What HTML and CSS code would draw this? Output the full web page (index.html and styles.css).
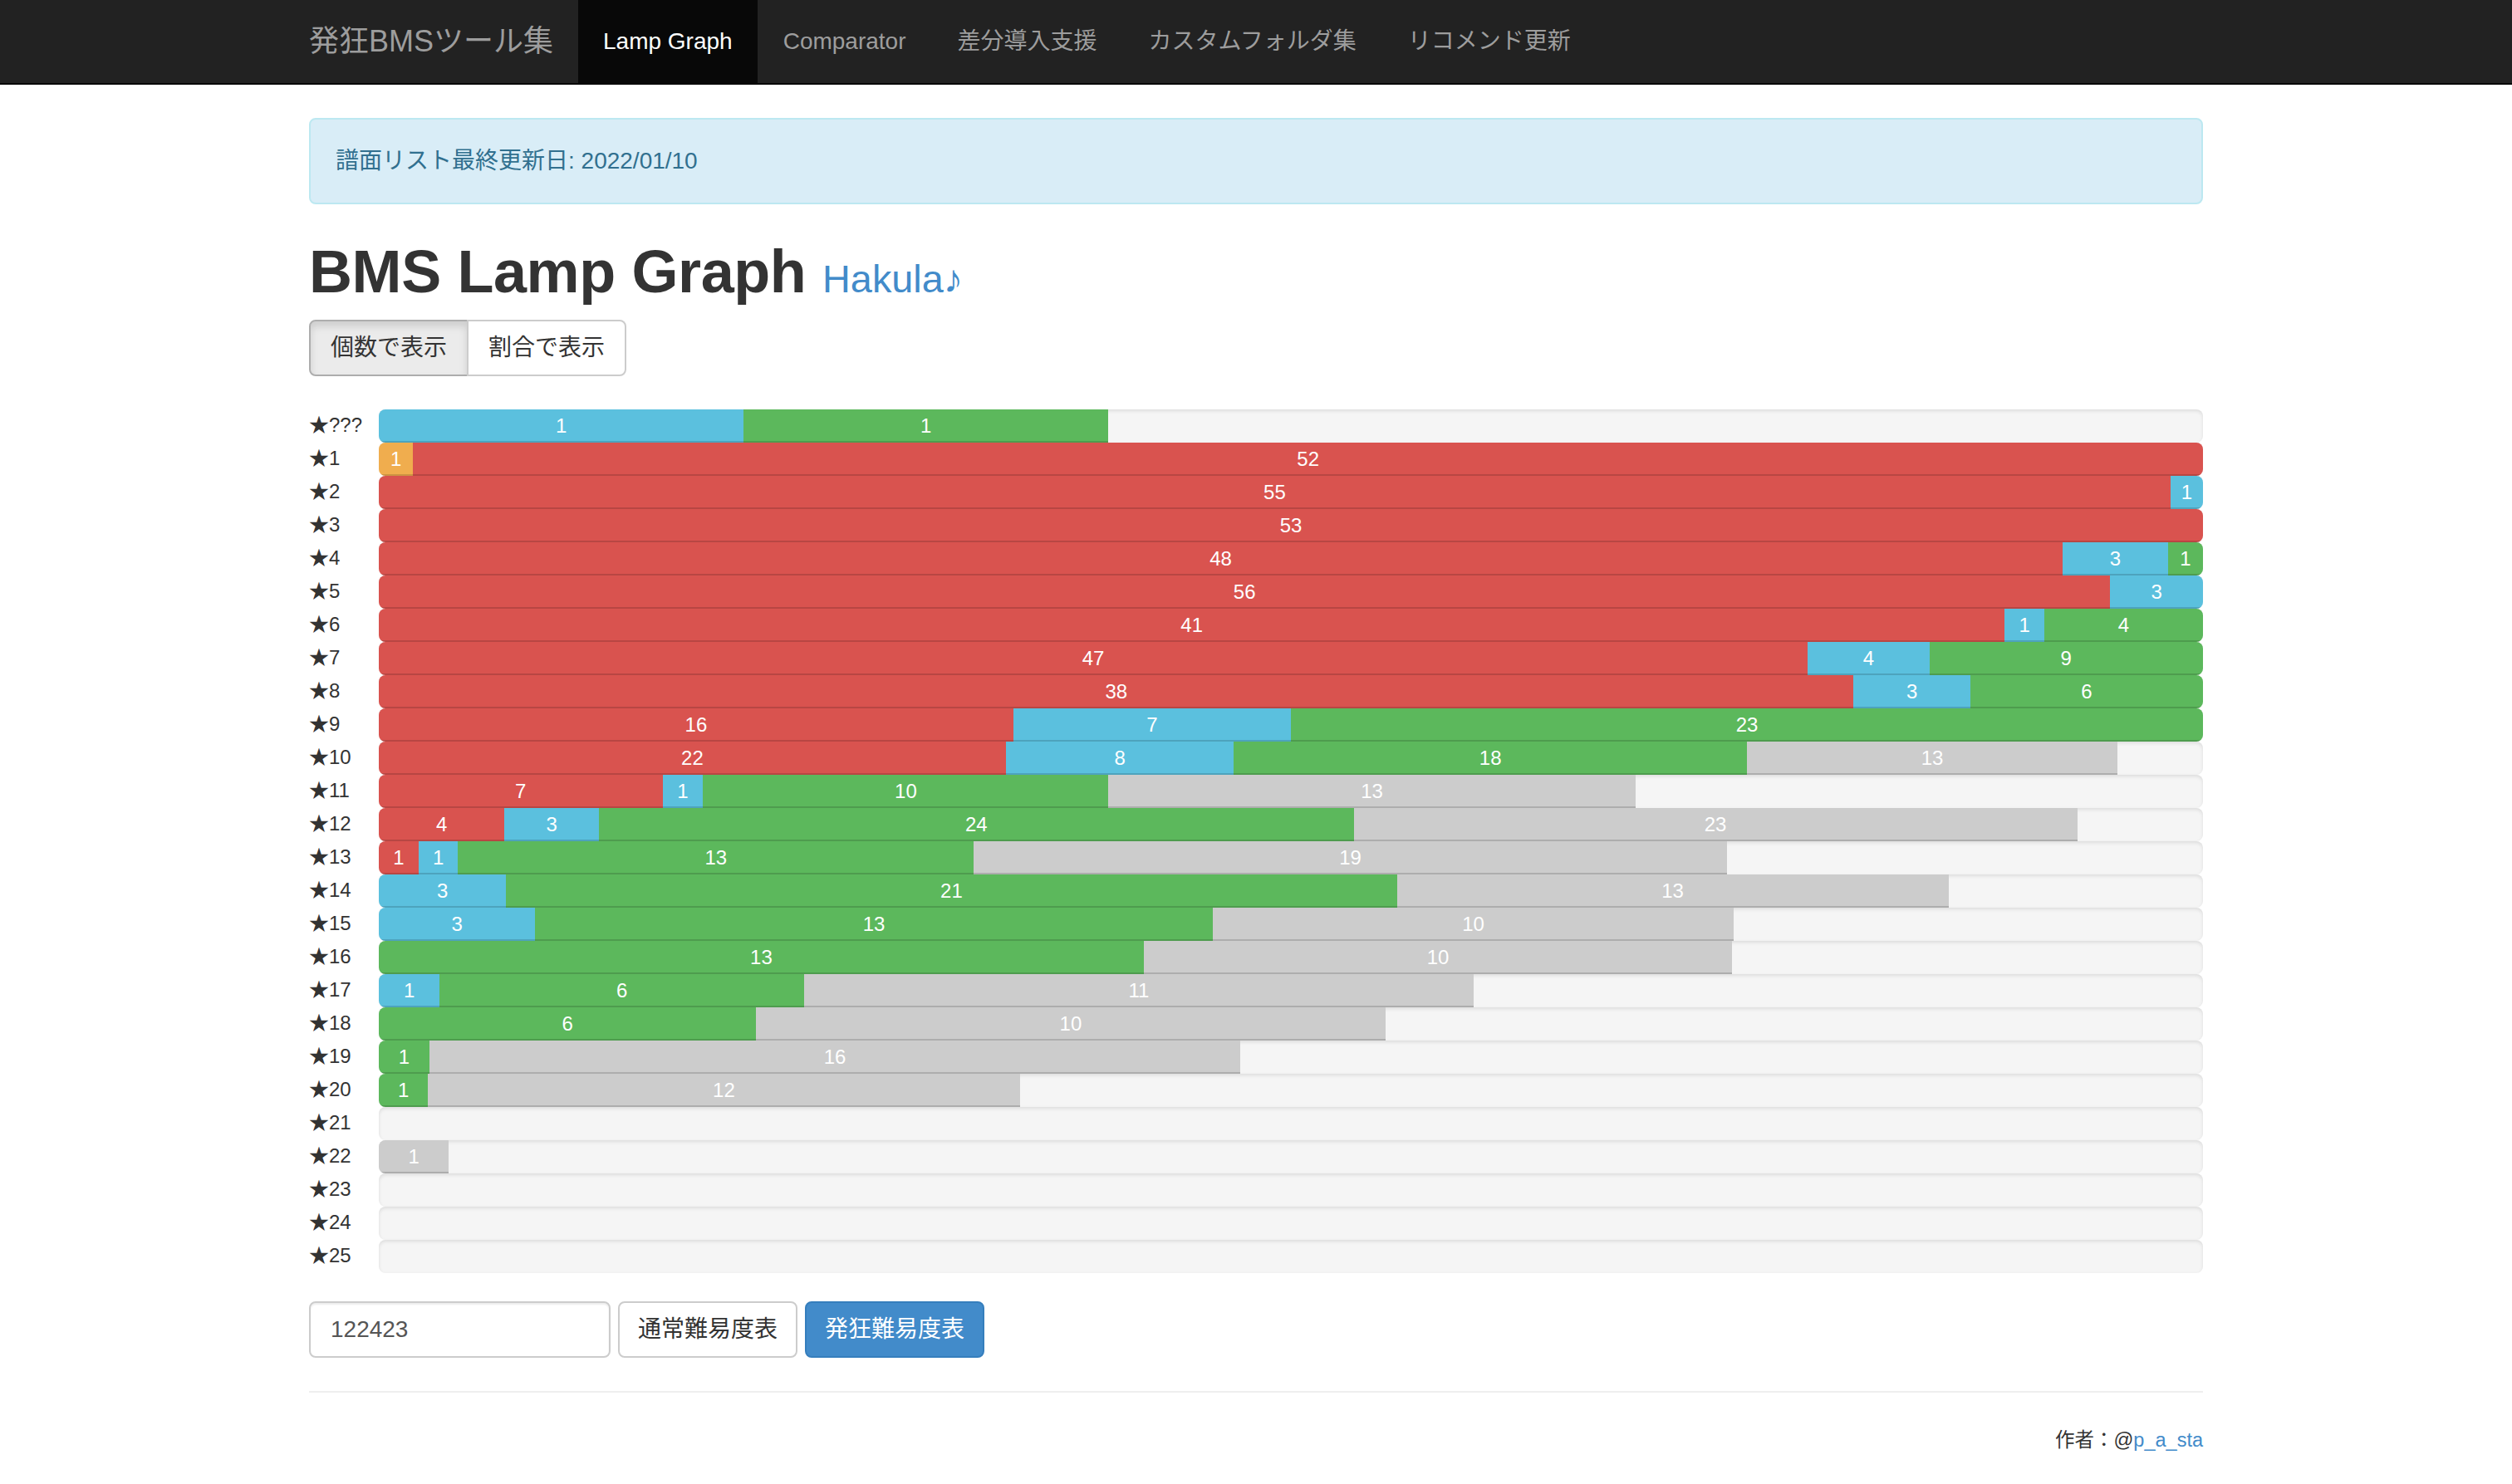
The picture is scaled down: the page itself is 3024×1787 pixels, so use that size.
FILE: index.html
```html
<!DOCTYPE html>
<html lang="ja">
<head>
<meta charset="utf-8">
<title>BMS Lamp Graph</title>
<link rel="stylesheet" href="styles.css">
</head>
<body>
<nav class="navbar">
  <div class="container navbar-inner">
    <a class="navbar-brand" href="#">発狂BMSツール集</a>
    <ul class="nav">
      <li class="active"><a href="#">Lamp Graph</a></li>
      <li><a href="#">Comparator</a></li>
      <li><a href="#">差分導入支援</a></li>
      <li><a href="#">カスタムフォルダ集</a></li>
      <li><a href="#">リコメンド更新</a></li>
    </ul>
  </div>
</nav>

<div class="container">
  <div class="alert">譜面リスト最終更新日: 2022/01/10</div>

  <h1 class="title">BMS Lamp Graph <a class="user" href="#">Hakula♪</a></h1>

  <div class="btn-group">
    <button class="btn active">個数で表示</button>
    <button class="btn">割合で表示</button>
  </div>

  <div class="graph">
    <div class="label">★???</div>
    <div class="progress"><div class="bar info" style="width:20%">1</div><div class="bar success" style="width:20%">1</div></div>

    <div class="label">★1</div>
    <div class="progress"><div class="bar warning" style="width:1.8868%">1</div><div class="bar danger" style="width:98.1132%">52</div></div>

    <div class="label">★2</div>
    <div class="progress"><div class="bar danger" style="width:98.2143%">55</div><div class="bar info" style="width:1.7857%">1</div></div>

    <div class="label">★3</div>
    <div class="progress"><div class="bar danger" style="width:100%">53</div></div>

    <div class="label">★4</div>
    <div class="progress"><div class="bar danger" style="width:92.3077%">48</div><div class="bar info" style="width:5.7692%">3</div><div class="bar success" style="width:1.9231%">1</div></div>

    <div class="label">★5</div>
    <div class="progress"><div class="bar danger" style="width:94.9153%">56</div><div class="bar info" style="width:5.0847%">3</div></div>

    <div class="label">★6</div>
    <div class="progress"><div class="bar danger" style="width:89.1304%">41</div><div class="bar info" style="width:2.1739%">1</div><div class="bar success" style="width:8.6957%">4</div></div>

    <div class="label">★7</div>
    <div class="progress"><div class="bar danger" style="width:78.3333%">47</div><div class="bar info" style="width:6.6667%">4</div><div class="bar success" style="width:15%">9</div></div>

    <div class="label">★8</div>
    <div class="progress"><div class="bar danger" style="width:80.8511%">38</div><div class="bar info" style="width:6.383%">3</div><div class="bar success" style="width:12.766%">6</div></div>

    <div class="label">★9</div>
    <div class="progress"><div class="bar danger" style="width:34.7826%">16</div><div class="bar info" style="width:15.2174%">7</div><div class="bar success" style="width:50%">23</div></div>

    <div class="label">★10</div>
    <div class="progress"><div class="bar danger" style="width:34.375%">22</div><div class="bar info" style="width:12.5%">8</div><div class="bar success" style="width:28.125%">18</div><div class="bar gray" style="width:20.3125%">13</div></div>

    <div class="label">★11</div>
    <div class="progress"><div class="bar danger" style="width:15.5556%">7</div><div class="bar info" style="width:2.2222%">1</div><div class="bar success" style="width:22.2222%">10</div><div class="bar gray" style="width:28.8889%">13</div></div>

    <div class="label">★12</div>
    <div class="progress"><div class="bar danger" style="width:6.8966%">4</div><div class="bar info" style="width:5.1724%">3</div><div class="bar success" style="width:41.3793%">24</div><div class="bar gray" style="width:39.6552%">23</div></div>

    <div class="label">★13</div>
    <div class="progress"><div class="bar danger" style="width:2.1739%">1</div><div class="bar info" style="width:2.1739%">1</div><div class="bar success" style="width:28.2609%">13</div><div class="bar gray" style="width:41.3043%">19</div></div>

    <div class="label">★14</div>
    <div class="progress"><div class="bar info" style="width:6.9767%">3</div><div class="bar success" style="width:48.8372%">21</div><div class="bar gray" style="width:30.2326%">13</div></div>

    <div class="label">★15</div>
    <div class="progress"><div class="bar info" style="width:8.5714%">3</div><div class="bar success" style="width:37.1429%">13</div><div class="bar gray" style="width:28.5714%">10</div></div>

    <div class="label">★16</div>
    <div class="progress"><div class="bar success" style="width:41.9355%">13</div><div class="bar gray" style="width:32.2581%">10</div></div>

    <div class="label">★17</div>
    <div class="progress"><div class="bar info" style="width:3.3333%">1</div><div class="bar success" style="width:20%">6</div><div class="bar gray" style="width:36.6667%">11</div></div>

    <div class="label">★18</div>
    <div class="progress"><div class="bar success" style="width:20.6897%">6</div><div class="bar gray" style="width:34.4828%">10</div></div>

    <div class="label">★19</div>
    <div class="progress"><div class="bar success" style="width:2.7778%">1</div><div class="bar gray" style="width:44.4444%">16</div></div>

    <div class="label">★20</div>
    <div class="progress"><div class="bar success" style="width:2.7027%">1</div><div class="bar gray" style="width:32.4324%">12</div></div>

    <div class="label">★21</div>
    <div class="progress"></div>

    <div class="label">★22</div>
    <div class="progress"><div class="bar gray" style="width:3.8462%">1</div></div>

    <div class="label">★23</div>
    <div class="progress"></div>

    <div class="label">★24</div>
    <div class="progress"></div>

    <div class="label">★25</div>
    <div class="progress"></div>
  </div>

  <form class="table-form">
    <input class="form-control" type="text" value="122423">
    <button type="button" class="btn btn-table">通常難易度表</button>
    <button type="button" class="btn btn-table btn-primary">発狂難易度表</button>
  </form>

  <hr class="divider">

  <footer class="footer">作者：@<a href="#">p_a_sta</a></footer>
</div>
</body>
</html>
```

FILE: styles.css
```css
* {
  box-sizing: border-box;
}

html, body {
  margin: 0;
  padding: 0;
  background: #fff;
}

body {
  font-family: "Liberation Sans", "Noto Sans CJK JP", sans-serif;
  font-size: 28px;
  line-height: 40px;
  color: #333;
}

a {
  color: #428bca;
  text-decoration: none;
}

.container {
  width: 2340px;
  margin: 0 auto;
  padding: 0 30px;
}

/* navbar */
.navbar {
  background: #222;
  border-bottom: 2px solid #080808;
  height: 102px;
  margin-bottom: 40px;
}

.navbar-inner {
  display: flex;
  align-items: stretch;
  height: 100px;
}

.navbar-brand {
  display: block;
  margin-left: -30px;
  padding: 30px 30px;
  font-size: 36px;
  line-height: 40px;
  color: #9d9d9d;
}

.nav {
  display: flex;
  list-style: none;
  margin: 0;
  padding: 0;
}

.nav li a {
  display: block;
  padding: 30px 31px;
  line-height: 40px;
  font-size: 28px;
  color: #9d9d9d;
}

.nav li.active a {
  padding: 30px 30px;
  background: #080808;
  color: #fff;
}

/* alert */
.alert {
  padding: 30px;
  border: 2px solid #bce8f1;
  border-radius: 8px;
  background: #d9edf7;
  color: #31708f;
  margin-bottom: 40px;
}

/* heading */
.title {
  font-size: 72px;
  font-weight: 700;
  letter-spacing: -0.4px;
  line-height: 1.1;
  margin: 42px 0 18px;
  color: #333;
}

.user {
  font-size: 65%;
  font-weight: 400;
  letter-spacing: 0;
}

/* buttons */
.btn {
  display: inline-block;
  font-family: inherit;
  font-size: 28px;
  line-height: 40px;
  padding: 12px 24px;
  border: 2px solid #ccc;
  border-radius: 8px;
  background: #fff;
  color: #333;
  cursor: pointer;
  margin: 0;
}

.btn-group {
  display: flex;
}

.btn-group .btn:first-child {
  border-top-right-radius: 0;
  border-bottom-right-radius: 0;
}

.btn-group .btn + .btn {
  margin-left: -2px;
  border-top-left-radius: 0;
  border-bottom-left-radius: 0;
}

.btn.active {
  background: #ebebeb;
  border-color: #adadad;
  box-shadow: inset 0 6px 10px rgba(0, 0, 0, 0.125);
}

.btn-table {
  padding: 12px 22px;
}

.btn-primary {
  background: #428bca;
  border-color: #357ebd;
  color: #fff;
}

/* graph */
.graph {
  display: grid;
  grid-template-columns: 84px 1fr;
  margin-top: 40px;
}

.label {
  font-size: 24px;
  line-height: 38px;
  height: 40px;
  color: #333;
  white-space: nowrap;
}

.progress {
  display: flex;
  height: 40px;
  overflow: hidden;
  background: #f5f5f5;
  border-radius: 8px;
  box-shadow: inset 0 2px 4px rgba(0, 0, 0, 0.1);
}

.bar {
  height: 40px;
  font-size: 24px;
  line-height: 40px;
  color: #fff;
  text-align: center;
  box-shadow: inset 0 -2px 0 rgba(0, 0, 0, 0.15);
  overflow: hidden;
  white-space: nowrap;
}

.bar.danger { background: #d9534f; }
.bar.info { background: #5bc0de; }
.bar.success { background: #5cb85c; }
.bar.warning { background: #f0ad4e; }
.bar.gray { background: #cccccc; }

/* form */
.table-form {
  display: flex;
  gap: 9px;
  margin: 34px 0 0;
}

.form-control {
  width: 363px;
  height: 68px;
  padding: 12px 24px;
  font-family: inherit;
  font-size: 28px;
  line-height: 40px;
  color: #555;
  background: #fff;
  border: 2px solid #ccc;
  border-radius: 8px;
  box-shadow: inset 0 2px 2px rgba(0, 0, 0, 0.075);
}

.divider {
  border: 0;
  border-top: 2px solid #eee;
  margin: 40px 0;
}

.footer {
  text-align: right;
  font-size: 23.5px;
  line-height: 34px;
}
```
